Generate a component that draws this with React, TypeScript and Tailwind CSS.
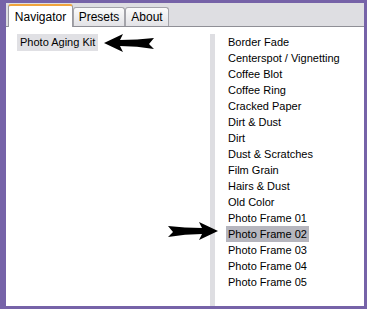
import React from 'react'

const effects = [
  'Border Fade',
  'Centerspot / Vignetting',
  'Coffee Blot',
  'Coffee Ring',
  'Cracked Paper',
  'Dirt & Dust',
  'Dirt',
  'Dust & Scratches',
  'Film Grain',
  'Hairs & Dust',
  'Old Color',
  'Photo Frame 01',
  'Photo Frame 02',
  'Photo Frame 03',
  'Photo Frame 04',
  'Photo Frame 05',
]

const Arrow = ({ flip = false }: { flip?: boolean }) => (
  <svg
    width="50"
    height="18"
    viewBox="0 0 50 18"
    className={flip ? '-scale-x-100' : ''}
  >
    <path
      d="M0 9 L19 0 L16 6 Q33 6 50 4 L45 10 L50 15 Q33 12 16 12 L19 18 Z"
      fill="#000"
    />
  </svg>
)

export default function App() {
  return (
    <div
      className="w-[367px] h-[309px] bg-[#7663a8] pt-[3px] pl-[6px] pr-[3px] pb-[3px]"
      style={{ fontFamily: '"Liberation Sans", Arial, sans-serif' }}
    >
      <div className="w-full h-full bg-white flex flex-col">
        {/* tab strip */}
        <div className="h-[24px] bg-[#dedee2] border-b border-[#8f8f96] flex items-end pl-[2px] shrink-0">
          <div className="relative z-10 -mb-px h-[23px] w-[65px] bg-white border-x border-[#9a9aa0] border-t-2 border-t-[#f0a43c] rounded-t-[3px] flex items-center justify-center text-[12px] text-black">
            Navigator
          </div>
          <div className="h-[19px] w-[52px] bg-gradient-to-b from-[#fbfbfb] to-[#e2e2e6] border border-b-0 border-[#a4a4aa] rounded-t-[3px] flex items-center justify-center text-[12px] text-black">
            Presets
          </div>
          <div className="h-[19px] w-[44px] bg-gradient-to-b from-[#fbfbfb] to-[#e2e2e6] border border-b-0 border-[#a4a4aa] rounded-t-[3px] flex items-center justify-center text-[12px] text-black">
            About
          </div>
        </div>

        {/* body */}
        <div className="flex flex-1 min-h-0">
          <div className="w-[204px] pt-[7px] pl-[11px] flex items-start gap-[6px]">
            <span className="bg-[#e0e0e4] px-[3px] h-[17px] leading-[17px] text-[11px] text-black">
              Photo Aging Kit
            </span>
            <Arrow />
          </div>
          <div className="w-[5px] mt-[7px] bg-[#dedee2]" />
          <div className="flex-1 pt-[7px] pl-[11px] relative">
            {effects.map((name) => (
              <div key={name} className="h-[16px] flex items-center">
                <span
                  className={`px-[2px] leading-[16px] text-[11px] text-black ${
                    name === 'Photo Frame 02' ? 'bg-[#b6b6be]' : ''
                  }`}
                >
                  {name}
                </span>
              </div>
            ))}
            <div className="absolute left-[-47px] top-[195px]">
              <Arrow flip />
            </div>
          </div>
        </div>
      </div>
    </div>
  )
}
